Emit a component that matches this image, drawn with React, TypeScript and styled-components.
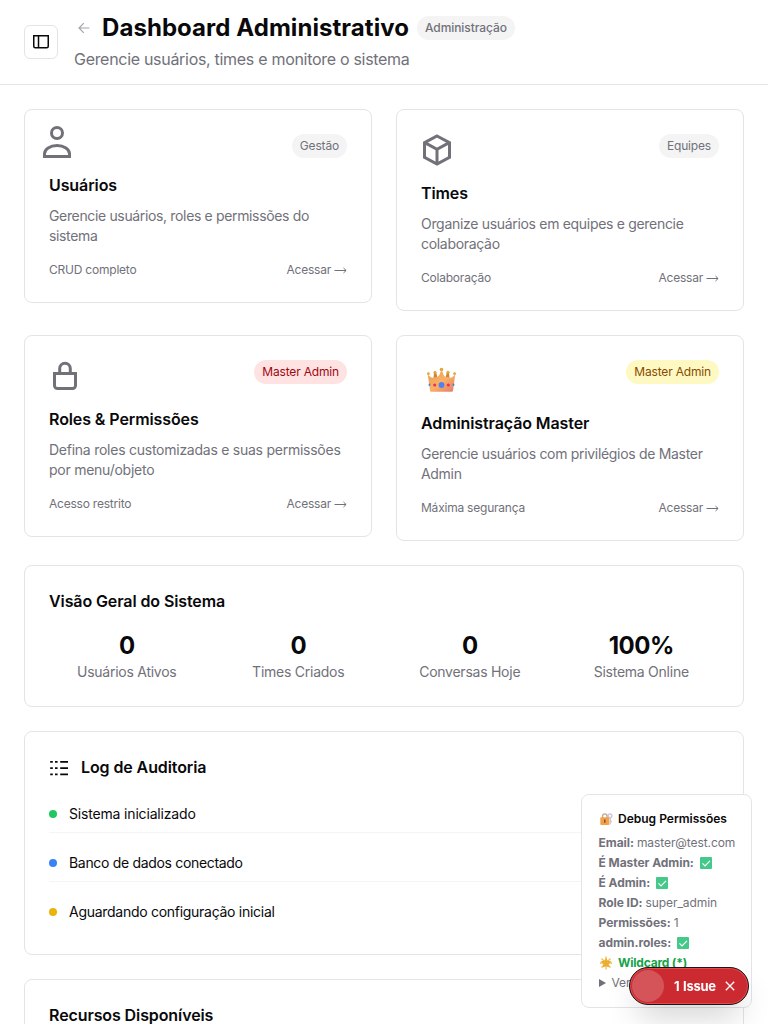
import React from "react";
import styled, { createGlobalStyle } from "styled-components";

const Global = createGlobalStyle`
  *, *::before, *::after { box-sizing: border-box; }
  body { margin: 0; background: #fff; color: #09090b; font-family: Inter, "Liberation Sans", sans-serif; font-size: 14px; line-height: 20px; }
  h1, h2, h3, p { margin: 0; }
  button { font: inherit; color: inherit; padding: 0; }
  svg { display: block; flex: none; }
`;

const Page = styled.div`
  height: 100vh;
  overflow: hidden;
`;
const Header = styled.header`
  display: flex;
  align-items: center;
  gap: 16px;
  padding: 12px 24px;
  border-bottom: 1px solid #e4e4e7;
`;
const SidebarButton = styled.button`
  display: grid;
  place-items: center;
  width: 34px;
  height: 34px;
  background: #fff;
  border: 1px solid #e4e4e7;
  border-radius: 6px;
`;
const Heading = styled.div`
  display: flex;
  flex-direction: column;
  gap: 4px;
`;
const TitleRow = styled.div`
  display: flex;
  align-items: center;
  gap: 8px;
  height: 32px;
`;
const Back = styled.span`
  display: grid;
  place-items: center;
  width: 20px;
  color: #a1a1aa;
`;
const Title = styled.h1`
  font-size: 24px;
  line-height: 32px;
  font-weight: 700;
  letter-spacing: 0.06px;
  white-space: nowrap;
`;
const Subtitle = styled.p`
  padding-bottom: 2px;
  font-size: 16px;
  line-height: 22px;
  color: #71717a;
  letter-spacing: -0.3px;
`;
const tones = {
  gray: ["#f4f4f5", "#71717a"],
  red: ["#ffe2e2", "#9f0712"],
  yellow: ["#fef9c2", "#894b00"],
};
const Badge = styled.span<{ $tone?: keyof typeof tones; $medium?: boolean }>`
  height: 24px;
  padding: 4px 8px;
  border-radius: 12px;
  font-size: 12px;
  line-height: 16px;
  letter-spacing: ${(p) => (p.$medium ? "-0.08px" : "-0.17px")};
  white-space: nowrap;
  font-weight: ${(p) => (p.$medium ? 500 : 400)};
  background: ${(p) => tones[p.$tone ?? "gray"][0]};
  color: ${(p) => tones[p.$tone ?? "gray"][1]};
`;
const Main = styled.main`
  display: flex;
  flex-direction: column;
  gap: 24px;
  padding: 24px;
`;
const CardGrid = styled.div`
  display: grid;
  grid-template-columns: 1fr 1fr;
  gap: 24px;
  align-items: start;
`;
const Card = styled.section`
  padding: 24px;
  background: #fff;
  border: 1px solid #e4e4e7;
  border-radius: 8px;
`;
const CardHead = styled.div`
  display: flex;
  align-items: flex-start;
  justify-content: space-between;
  margin-bottom: 16px;
`;
const IconSlot = styled.div<{ $inset?: boolean }>`
  color: #71717a;
  margin: ${(p) => (p.$inset ? "-8px" : "0")};
`;
const CrownSlot = styled.div`
  height: 36px;
  padding: 7px 0 0 6px;
`;
const CardTitle = styled.h3`
  padding-bottom: 2px;
  font-size: 16px;
  line-height: 22px;
  font-weight: 600;
  letter-spacing: -0.1px;
`;
const Description = styled.p<{ $tracking?: number }>`
  margin: 8px 0 16px;
  color: #71717a;
  letter-spacing: ${(p) => p.$tracking ?? -0.33}px;
`;
const CardFoot = styled.div`
  display: flex;
  justify-content: space-between;
  font-size: 12px;
  line-height: 16px;
  letter-spacing: -0.22px;
  color: #71717a;
`;
const Access = styled.span`
  display: flex;
  align-items: center;
  gap: 3px;
`;
const Stats = styled.div`
  display: grid;
  grid-template-columns: repeat(4, 1fr);
  gap: 16px;
  margin-top: 16px;
  text-align: center;
`;
const StatValue = styled.div`
  font-size: 24px;
  line-height: 32px;
  font-weight: 700;
  letter-spacing: -0.5px;
`;
const StatLabel = styled.div`
  color: #71717a;
  letter-spacing: -0.25px;
`;
const LogTitle = styled.div`
  display: flex;
  align-items: center;
  gap: 12px;
  margin-bottom: 16px;
`;
const LogList = styled.div`
  display: flex;
  flex-direction: column;
  gap: 12px;
`;
const LogRow = styled.div<{ $tracking: number }>`
  display: flex;
  align-items: center;
  gap: 12px;
  padding: 8px 0;
  letter-spacing: ${(p) => p.$tracking}px;
  border-bottom: 1px solid #f4f4f5;
  &:last-child { border-bottom: 0; }
`;
const Dot = styled.span<{ $color: string }>`
  width: 8px;
  height: 8px;
  border-radius: 50%;
  background: ${(p) => p.$color};
`;
const DebugPanel = styled.aside`
  position: fixed;
  right: 16px;
  bottom: 16px;
  width: 171px;
  display: flex;
  flex-direction: column;
  gap: 4px;
  padding: 16px;
  background: #fff;
  border: 1px solid #e4e4e7;
  border-radius: 8px;
  font-size: 12px;
  line-height: 16px;
  color: #71717a;
  white-space: nowrap;
`;
const DebugTitle = styled.div`
  display: flex;
  align-items: center;
  gap: 4px;
  padding-left: 1px;
  margin-bottom: 4px;
  font-weight: 600;
  color: #09090b;
`;
const DebugRow = styled.div`
  display: flex;
  align-items: center;
  gap: 3px;
  height: 16px;
  padding-left: 0.5px;
  letter-spacing: -0.08px;
  b { font-weight: 700; letter-spacing: -0.05px; }
`;
const Wildcard = styled(DebugRow)`
  gap: 4px;
  padding-left: 1px;
  color: #16a34a;
  b { letter-spacing: -0.2px; }
`;
const Toast = styled.div`
  position: fixed;
  right: 19px;
  bottom: 19px;
  width: 120px;
  height: 38px;
  display: flex;
  align-items: center;
  padding-left: 2px;
  color: #fff;
  background: #ca2a30;
  border: 1px solid #171717;
  border-radius: 19px;
  box-shadow: inset 0 0 0 1px #e5484d, 0 16px 32px -8px rgba(0, 0, 0, 0.24);
  font-size: 13px;
  font-weight: 700;
  letter-spacing: -0.3px;
  word-spacing: 1px;
`;
const ToastMark = styled.span`
  width: 32px;
  height: 32px;
  margin-right: 10px;
  border-radius: 50%;
  background: rgba(255, 255, 255, 0.2);
`;
const ToastText = styled.span`
  flex: none;
  width: 51px;
`;

const PanelIcon = () => (
  <svg width="16" height="16" viewBox="0 0 16 16" fill="none" stroke="#09090b" strokeWidth="1.5">
    <path d="M.75 1.75h14.5v10.5a1.5 1.5 0 0 1-1.5 1.5H2.25a1.5 1.5 0 0 1-1.5-1.5zM5.5 2v11.5" />
  </svg>
);
const BackIcon = () => (
  <svg width="12" height="12" viewBox="0 0 12 12" fill="none" stroke="currentColor" strokeWidth="1.1">
    <path d="M11.3 6H1.4M5.8 1.2 1 6l4.800 4.800" />
  </svg>
);
const UserIcon = () => (
  <svg width="32" height="32" viewBox="0 0 16 16" fill="none" stroke="currentColor" strokeWidth="1.5">
    <circle cx="8" cy="3.5" r="2.75" />
    <path d="M1.75 15.25v-1.4c0-2.2 2.7-4.1 6.25-4.1s6.25 1.9 6.25 4.1v1.4z" />
  </svg>
);
const BoxIcon = () => (
  <svg width="32" height="32" viewBox="0 0 16 16" fill="none" stroke="currentColor" strokeWidth="1.5">
    <path d="M8 1l6.25 3.3v7.4L8 15l-6.25-3.3V4.3zM1.9 4.3 8 7.6l6.1-3.3M8 7.6v7.2" />
  </svg>
);
const LockIcon = () => (
  <svg width="32" height="32" viewBox="0 0 16 16" fill="none" stroke="currentColor" strokeWidth="1.5">
    <path d="M2.75 6.75h10.5v6a1.5 1.5 0 0 1-1.5 1.5h-7.5a1.5 1.5 0 0 1-1.5-1.5zM5.35 6.5V4.25a2.65 2.65 0 0 1 5.3 0V6.5" />
  </svg>
);
const CrownIcon = () => (
  <svg width="29" height="25" viewBox="0 0 29 25">
    <defs>
      <linearGradient id="crown" x1="0" y1="0" x2="1" y2="1">
        <stop offset="0" stopColor="#ec9a55" />
        <stop offset=".5" stopColor="#fbb165" />
        <stop offset="1" stopColor="#e27c6c" />
      </linearGradient>
    </defs>
    <path d="M7 5.500h2.200l1.500 6H6.500zM19.800 5.500H22l.5 6h-4.200z" fill="#c98a35" />
    <path d="M.8 7.500l3 2.700c1.300.8 2.600.3 4.200.1 3 0 4.500-1.300 5.600-5.800h1.800c1.100 4.500 2.600 5.800 5.600 5.800 1.600.2 2.900.7 4.200-.1l3-2.700L26 23.800c-.1.600-.5.900-1.100.9H4.100c-.6 0-1-.3-1.100-.9z" fill="url(#crown)" />
    <g fill="#dfa838">
      <circle cx="1.400" cy="6.700" r="1.400" /><circle cx="8" cy="5.200" r="1.500" /><circle cx="14.500" cy="2.600" r="1.800" /><circle cx="21" cy="5.200" r="1.500" /><circle cx="27.600" cy="6.700" r="1.400" />
    </g>
    <circle cx="14.500" cy="18" r="2.900" fill="#4c83f0" />
    <circle cx="7.700" cy="18" r="1.600" fill="#ea3352" /><circle cx="21.300" cy="18" r="1.600" fill="#ea3352" />
    <ellipse cx="2.500" cy="17.800" rx=".9" ry="1.300" fill="#3c82d8" /><ellipse cx="26.500" cy="17.800" rx=".9" ry="1.300" fill="#3c82d8" />
  </svg>
);
const ArrowRight = () => (
  <svg width="13" height="12" viewBox="0 0 13 12" fill="none" stroke="currentColor">
    <path d="M.5 6.5H12M9.500 4l2.600 2.500L9.500 9" />
  </svg>
);
const LogIcon = () => (
  <svg width="20" height="20" viewBox="0 0 20 20" fill="#09090b">
    {[3, 9.3, 15.5].map((y) => (
      <path key={y} d={`M1.200 ${y}h2.600v1.700H1.200zM6 ${y}h2.600v1.700H6zM11.200 ${y}h7.800v1.700h-7.800z`} />
    ))}
  </svg>
);
const CheckIcon = () => (
  <svg width="17" height="16" viewBox="0 0 17 16">
    <rect x="3" y="2" width="12" height="12" rx="1" fill="#45c98a" />
    <path d="M5.500 8.300l2.500 2.500 5-5" fill="none" stroke="#fff" strokeWidth="1.200" />
  </svg>
);
const LockKeyIcon = () => (
  <svg width="15" height="16" viewBox="0 0 15 16">
    <circle cx="11" cy="4.800" r="1.900" fill="none" stroke="#cfc8da" strokeWidth="1.500" />
    <path d="M11.300 7v6.500M11.500 10.500h1.500" fill="none" stroke="#cfc8da" strokeWidth="1.300" />
    <path d="M3.600 7V5a2.200 2.200 0 0 1 4.400 0v2" fill="none" stroke="#c2a894" strokeWidth="1.300" />
    <rect x="1.300" y="6.300" width="9" height="7.700" rx="1" fill="#f3a046" />
    <path d="M5.800 8.500v3.200" stroke="#7a4a34" strokeWidth="1.400" />
  </svg>
);
const StarIcon = () => (
  <svg width="15" height="16" viewBox="0 0 15 16">
    <path d="M7 1.500v13M1 8h12M2.500 3.500l9 9M11.500 3.500l-9 9" stroke="#f0bd55" strokeWidth="1.300" />
    <path d="M7 2.800l1.700 3 3.700.5-2.700 2.600.7 3.700L7 11.200l-3.400 1.400.7-3.700-2.700-2.600 3.700-.5z" fill="#ecae2d" />
  </svg>
);
const CloseIcon = () => (
  <svg width="10" height="10" viewBox="0 0 10 10" fill="none" stroke="currentColor" strokeWidth="1.3">
    <path d="M.8.8l8.400 8.400M9.200.8L.8 9.200" />
  </svg>
);

const cards: { icon: React.ReactNode; tag: string; tone?: keyof typeof tones; title: string; text: string; note: string; tracking?: number }[] = [
  { icon: <IconSlot $inset><UserIcon /></IconSlot>, tag: "Gestão", title: "Usuários", text: "Gerencie usuários, roles e permissões do sistema", note: "CRUD completo", tracking: -0.35 },
  { icon: <IconSlot><BoxIcon /></IconSlot>, tag: "Equipes", title: "Times", text: "Organize usuários em equipes e gerencie colaboração", note: "Colaboração", tracking: -0.31 },
  { icon: <IconSlot><LockIcon /></IconSlot>, tag: "Master Admin", tone: "red", title: "Roles & Permissões", text: "Defina roles customizadas e suas permissões por menu/objeto", note: "Acesso restrito", tracking: -0.25 },
  { icon: <CrownSlot><CrownIcon /></CrownSlot>, tag: "Master Admin", tone: "yellow", title: "Administração Master", text: "Gerencie usuários com privilégios de Master Admin", note: "Máxima segurança", tracking: -0.31 },
];
const stats = [["0", "Usuários Ativos"], ["0", "Times Criados"], ["0", "Conversas Hoje"], ["100%", "Sistema Online"]];
const logs = [
  { color: "#22c55e", text: "Sistema inicializado", tracking: -0.17 },
  { color: "#3b82f6", text: "Banco de dados conectado", tracking: -0.32 },
  { color: "#eab308", text: "Aguardando configuração inicial", tracking: -0.28 },
];

export default function App() {
  return (
    <Page>
      <Global />
      <Header>
        <SidebarButton aria-label="Menu"><PanelIcon /></SidebarButton>
        <Heading>
          <TitleRow>
            <Back><BackIcon /></Back>
            <Title>Dashboard Administrativo</Title>
            <Badge $medium>Administração</Badge>
          </TitleRow>
          <Subtitle>Gerencie usuários, times e monitore o sistema</Subtitle>
        </Heading>
      </Header>
      <Main>
        <CardGrid>
          {cards.map((c) => (
            <Card key={c.title}>
              <CardHead>{c.icon}<Badge $tone={c.tone}>{c.tag}</Badge></CardHead>
              <CardTitle>{c.title}</CardTitle>
              <Description $tracking={c.tracking}>{c.text}</Description>
              <CardFoot><span>{c.note}</span><Access>Acessar <ArrowRight /></Access></CardFoot>
            </Card>
          ))}
        </CardGrid>
        <Card>
          <CardTitle>Visão Geral do Sistema</CardTitle>
          <Stats>
            {stats.map(([v, l]) => (
              <div key={l}><StatValue>{v}</StatValue><StatLabel>{l}</StatLabel></div>
            ))}
          </Stats>
        </Card>
        <Card>
          <LogTitle><LogIcon /><CardTitle>Log de Auditoria</CardTitle></LogTitle>
          <LogList>
            {logs.map((l) => <LogRow key={l.text} $tracking={l.tracking}><Dot $color={l.color} />{l.text}</LogRow>)}
          </LogList>
        </Card>
        <Card><CardTitle>Recursos Disponíveis</CardTitle></Card>
      </Main>
      <DebugPanel>
        <DebugTitle><LockKeyIcon />Debug Permissões</DebugTitle>
        <DebugRow><b>Email:</b> master@test.com</DebugRow>
        <DebugRow><b>É Master Admin:</b> <CheckIcon /></DebugRow>
        <DebugRow><b>É Admin:</b> <CheckIcon /></DebugRow>
        <DebugRow><b>Role ID:</b> super_admin</DebugRow>
        <DebugRow><b>Permissões:</b> 1</DebugRow>
        <DebugRow><b>admin.roles:</b> <CheckIcon /></DebugRow>
        <Wildcard><StarIcon /><b>Wildcard (*)</b></Wildcard>
        <DebugRow>
          <svg width="10" height="10" viewBox="0 0 10 10" fill="currentColor"><path d="M0 1l7 4-7 4z" /></svg>
          Ver
        </DebugRow>
      </DebugPanel>
      <Toast><ToastMark /><ToastText>1 Issue</ToastText><CloseIcon /></Toast>
    </Page>
  );
}
